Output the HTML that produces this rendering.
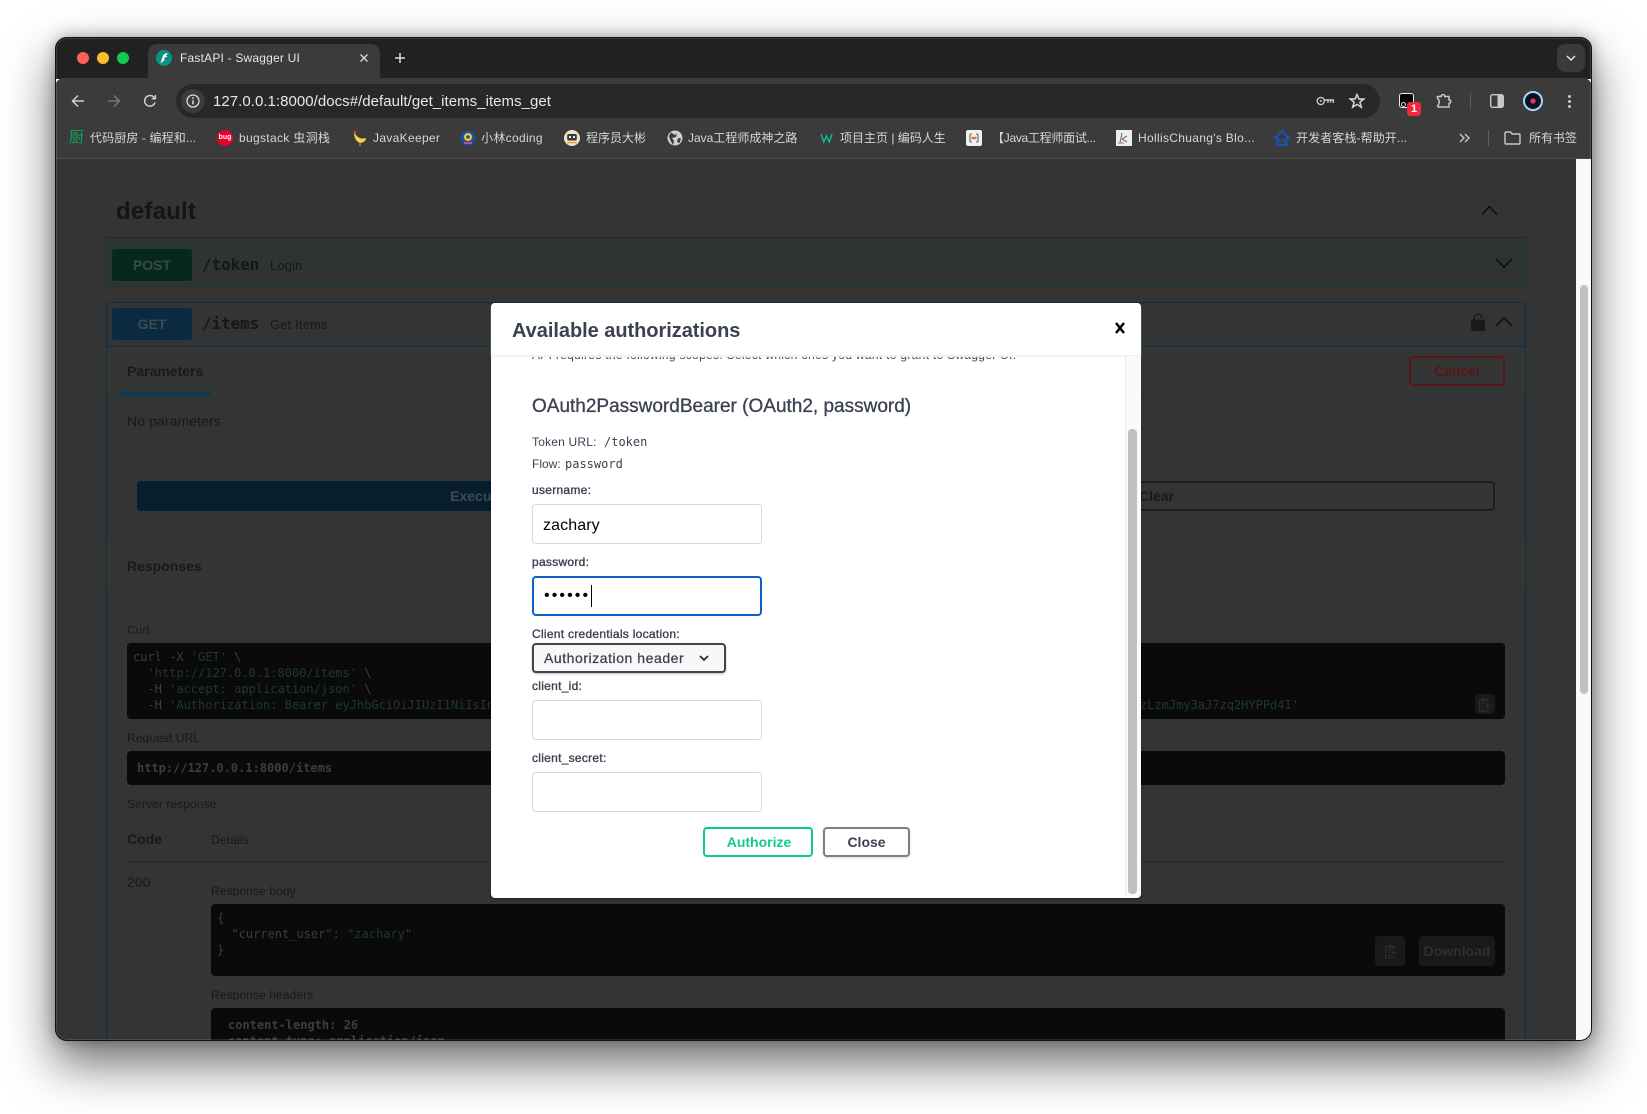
<!DOCTYPE html>
<html lang="zh">
<head>
<meta charset="utf-8">
<title>FastAPI - Swagger UI</title>
<style>
html,body{margin:0;padding:0;background:#fff;width:1647px;height:1114px;overflow:hidden}
body{font-family:"Liberation Sans","Noto Sans CJK SC",sans-serif;position:relative}
.a{position:absolute}
.t{position:absolute;white-space:nowrap;line-height:20px;height:20px}
.m{font-family:"DejaVu Sans Mono","Liberation Mono",monospace}
#clip{position:absolute;left:0;top:0;width:1647px;height:1114px;clip-path:inset(37px 55px 73px 55px round 12px)}
.bm{font-size:12px;color:#d6d6d6}
.ls{letter-spacing:.32px}
.lab{font-size:12px;color:#3b4151;-webkit-text-stroke:.35px #3b4151;letter-spacing:.28px}
.pg{color:#151618}
.inp{position:absolute;left:532px;width:230px;height:40px;box-sizing:border-box;border:1px solid #d9d9d9;border-radius:4px;background:#fff}
.blk{position:absolute;background:#0a0a0b;border-radius:4px}
.cw{color:#3d3d3d;font-size:12px;line-height:16px;height:16px}
.cg{color:#1d3b27}
svg{position:absolute;display:block;overflow:visible}
</style>
</head>
<body>
<div class="a" style="left:55px;top:37px;width:1537px;height:1004px;border-radius:12px;box-shadow:0 22px 48px 2px rgba(0,0,0,.55),0 0 14px rgba(0,0,0,.3)"></div>
<div id="clip">
  <!-- title bar -->
  <div class="a" style="left:55px;top:37px;width:1537px;height:42px;background:#202221"></div>
  <div class="a" style="left:83px;top:58px;width:12px;height:12px;margin:-6px;border-radius:50%;background:#ff5f57"></div>
  <div class="a" style="left:103px;top:58px;width:12px;height:12px;margin:-6px;border-radius:50%;background:#febc2e"></div>
  <div class="a" style="left:123px;top:58px;width:12px;height:12px;margin:-6px;border-radius:50%;background:#13c94f"></div>
  <div class="a" style="left:148px;top:44px;width:232px;height:36px;background:#3b3b3b;border-radius:9px 9px 0 0"></div>
  <div class="a" style="left:156px;top:50px;width:16px;height:16px;border-radius:50%;background:#0b9283"></div>
  <svg style="left:156px;top:50px" width="16" height="16" viewBox="0 0 16 16"><path d="M4.5 13.5L6.8 6.2C7.3 4.6 8.8 3.4 11.8 2.9L10 6H11.6L9.8 7.4H8.7L7.9 9.6H9.2Z" fill="#fff"/></svg>
  <div class="t" style="left:180px;top:48px;font-size:12px;color:#e6e6e6;letter-spacing:.2px">FastAPI - Swagger UI</div>
  <svg style="left:360px;top:54px" width="8" height="8" viewBox="0 0 8 8"><path d="M.5.5L7.5 7.5M7.5.5L.5 7.5" stroke="#dcdcdc" stroke-width="1.3"/></svg>
  <svg style="left:394px;top:52px" width="12" height="12" viewBox="0 0 12 12"><path d="M6 1V11M1 6H11" stroke="#dcdcdc" stroke-width="1.5"/></svg>
  <div class="a" style="left:1557px;top:44px;width:28px;height:28px;border-radius:8px;background:#3a3a3a"></div>
  <svg style="left:1566px;top:55px" width="10" height="6" viewBox="0 0 10 6"><path d="M1 1L5 5L9 1" stroke="#e6e6e6" stroke-width="1.5" fill="none"/></svg>

  <!-- toolbar -->
  <div class="a" style="left:55px;top:78px;width:1537px;height:81px;background:#3b3b3b;border-radius:9px 9px 0 0;border-bottom:1px solid #4b4b4b;box-sizing:border-box"></div>
  <svg style="left:71px;top:94px" width="14" height="14" viewBox="0 0 14 14"><path d="M13 7H2M7 1.5L1.5 7L7 12.5" stroke="#cfcfcf" stroke-width="1.5" fill="none"/></svg>
  <svg style="left:107px;top:94px" width="14" height="14" viewBox="0 0 14 14"><path d="M1 7H12M7 1.5L12.5 7L7 12.5" stroke="#777" stroke-width="1.5" fill="none"/></svg>
  <svg style="left:143px;top:94px" width="14" height="14" viewBox="0 0 14 14"><path d="M12 8.5A5.3 5.3 0 1 1 10.6 3L12.2 4.6M12.4 1V4.8H8.6" stroke="#cfcfcf" stroke-width="1.5" fill="none"/></svg>
  <div class="a" style="left:176px;top:84px;width:1204px;height:34px;border-radius:17px;background:#282828"></div>
  <div class="a" style="left:181px;top:89px;width:24px;height:24px;border-radius:50%;background:#3b3b3b"></div>
  <svg style="left:186px;top:94px" width="14" height="14" viewBox="0 0 14 14"><circle cx="7" cy="7" r="6" stroke="#dcdcdc" stroke-width="1.3" fill="none"/><path d="M7 6.2V10.4" stroke="#dcdcdc" stroke-width="1.5"/><circle cx="7" cy="4.2" r=".9" fill="#dcdcdc"/></svg>
  <div class="t" style="left:213px;top:92px;font-size:15px;color:#e8e8e8;letter-spacing:.04px">127.0.0.1:8000/docs#/default/get_items_items_get</div>
  <svg style="left:1316px;top:95px" width="18" height="12" viewBox="0 0 18 12"><circle cx="4.8" cy="6" r="3.6" stroke="#c8c8c8" stroke-width="1.4" fill="none"/><circle cx="4.8" cy="6" r="1" fill="#c8c8c8"/><path d="M8.4 5H17.4V8M12 5V8M14.8 5V7.5" stroke="#c8c8c8" stroke-width="1.4" fill="none"/></svg>
  <svg style="left:1349px;top:93px" width="16" height="16" viewBox="0 0 16 16"><path d="M8 1.5L9.9 6H14.8L10.9 9.2L12.3 14.2L8 11.4L3.7 14.2L5.1 9.2L1.2 6H6.1Z" stroke="#d8d8d8" stroke-width="1.5" fill="none"/></svg>
  <div class="a" style="left:1399px;top:93px;width:15px;height:15px;box-sizing:border-box;border:1px solid #eee;border-radius:3px;background:#000"></div>
  <div class="a" style="left:1401px;top:102px;width:5px;height:5px;border:1px solid #ddd;border-radius:50%;box-sizing:border-box"></div>
  <div class="a" style="left:1407px;top:102px;width:14px;height:14px;border-radius:3px;background:#f5263f;color:#fff;font-size:11px;font-weight:bold;line-height:14px;text-align:center">1</div>
  <svg style="left:1435px;top:92px" width="18" height="18" viewBox="0 0 18 18"><path d="M2.5 4.5H6.2C6 2 10 2 9.8 4.5H14V8C16.4 7.8 16.4 11.4 14 11.2V15H3.5C2.6 15 2.5 14 3 13.4C4.6 11.4 4.6 8.6 3 6.6C2.5 6 2 4.5 2.5 4.5Z" stroke="#c8c8c8" stroke-width="1.5" fill="none"/></svg>
  <div class="a" style="left:1470px;top:93px;width:1px;height:16px;background:#5e5e5e"></div>
  <svg style="left:1490px;top:94px" width="14" height="14" viewBox="0 0 14 14"><rect x=".7" y=".7" width="12.6" height="12.6" rx="2" stroke="#c8c8c8" stroke-width="1.4" fill="none"/><rect x="7.5" y="1" width="5.8" height="12" fill="#c8c8c8"/></svg>
  <svg style="left:1523px;top:91px" width="20" height="20" viewBox="0 0 20 20"><circle cx="10" cy="10" r="9" fill="#0c1226" stroke="#a8d8f0" stroke-width="2"/><circle cx="10" cy="10" r="2.6" fill="#ef3350"/></svg>
  <div class="a" style="left:1568px;top:95px;width:3px;height:3px;border-radius:50%;background:#c8c8c8"></div>
  <div class="a" style="left:1568px;top:100px;width:3px;height:3px;border-radius:50%;background:#c8c8c8"></div>
  <div class="a" style="left:1568px;top:105px;width:3px;height:3px;border-radius:50%;background:#c8c8c8"></div>

  <!-- bookmarks -->
  <div class="t" style="left:69px;top:128px;font-size:15px;color:#10a35a">厨</div>
  <div class="t bm" style="left:90px;top:128px;letter-spacing:.12px">代码厨房 - 编程和...</div>
  <div class="a" style="left:217px;top:130px;width:16px;height:16px;border-radius:50%;background:#e8002a;color:#fff;font-size:7px;font-weight:bold;line-height:16px;text-align:center">bug</div>
  <div class="t bm ls" style="left:239px;top:128px">bugstack 虫洞栈</div>
  <svg style="left:352px;top:130px" width="16" height="16" viewBox="0 0 16 16"><path d="M2 2C4 6 8 10 14 8C14 12 9 14 6 12C3 10 2 6 2 2Z" fill="#f4d04a"/><path d="M8 13V16" stroke="#aaa" stroke-width="1"/><circle cx="3" cy="2" r="1.5" fill="#c23b22"/></svg>
  <div class="t bm ls" style="left:373px;top:128px">JavaKeeper</div>
  <svg style="left:460px;top:130px" width="16" height="16" viewBox="0 0 16 16"><circle cx="8" cy="8" r="7.5" fill="#1d4fa0"/><circle cx="8" cy="7" r="4" fill="#f5c83a"/><circle cx="8" cy="7" r="1.8" fill="#1d4fa0"/><path d="M4 13H12" stroke="#e05a7a" stroke-width="1.5"/></svg>
  <div class="t bm ls" style="left:481px;top:128px">小林coding</div>
  <svg style="left:564px;top:130px" width="16" height="16" viewBox="0 0 16 16"><circle cx="8" cy="8" r="8" fill="#eee4cf"/><rect x="3.2" y="4" width="9.6" height="6.5" rx="1.5" fill="#3a3a3a"/><rect x="5" y="6" width="2" height="2" fill="#eee"/><rect x="9" y="6" width="2" height="2" fill="#eee"/><path d="M3 12.6H13" stroke="#e3a63c" stroke-width="1.4"/></svg>
  <div class="t bm" style="left:586px;top:128px">程序员大彬</div>
  <svg style="left:667px;top:130px" width="16" height="16" viewBox="0 0 16 16"><circle cx="8" cy="8" r="7.5" fill="#d0d0d0"/><path d="M4 2.5L8 5L10 3.5L9 7L5 8L7 11L6 15L3.2 10L2 6ZM11 8L14 8.5L12.5 13L10 12Z" fill="#3b3b3b"/></svg>
  <div class="t bm" style="left:688px;top:128px">Java工程师成神之路</div>
  <svg style="left:820px;top:133px" width="13" height="10" viewBox="0 0 13 10"><path d="M1 1L3.8 9L6.5 3L9.2 9L12 1" stroke="#11b892" stroke-width="1.5" fill="none"/></svg>
  <div class="t bm" style="left:840px;top:128px">项目主页 | 编码人生</div>
  <div class="a" style="left:966px;top:130px;width:16px;height:16px;border-radius:2px;background:#f2f2f2"></div>
  <svg style="left:966px;top:130px" width="16" height="16" viewBox="0 0 16 16"><path d="M4 4H6M10 4H12M4 12H6M10 12H12M4 4V12M12 4V12" fill="none" stroke="#666" stroke-width="1.1"/><path d="M5.5 8H10.5" stroke="#e27a2e" stroke-width="2.4"/></svg>
  <div class="t bm" style="left:992px;top:128px;letter-spacing:-.28px">【Java工程师面试...</div>
  <div class="a" style="left:1116px;top:130px;width:16px;height:16px;background:#eee"></div>
  <svg style="left:1116px;top:130px" width="16" height="16" viewBox="0 0 16 16"><path d="M4 13L6 3M6 9L11 12M6 9L11 6" stroke="#777" stroke-width="1.1" fill="none"/><path d="M2 13H8" stroke="#d76a8a" stroke-width="1.2"/></svg>
  <div class="t bm ls" style="left:1138px;top:128px">HollisChuang's Blo...</div>
  <svg style="left:1274px;top:130px" width="16" height="16" viewBox="0 0 16 16"><path d="M8 1L15 8H12.5V15H3.5V8H1Z" fill="none" stroke="#1a54c4" stroke-width="1.8"/><path d="M6 9V13M10 9V13" stroke="#1a54c4" stroke-width="1.6"/></svg>
  <div class="t bm" style="left:1296px;top:128px;letter-spacing:.1px">开发者客栈-帮助开...</div>
  <svg style="left:1459px;top:133px" width="11" height="10" viewBox="0 0 11 10"><path d="M1 1L5 5L1 9M6 1L10 5L6 9" stroke="#c8c8c8" stroke-width="1.4" fill="none"/></svg>
  <div class="a" style="left:1488px;top:130px;width:1px;height:16px;background:#5e5e5e"></div>
  <svg style="left:1504px;top:131px" width="17" height="14" viewBox="0 0 17 14"><path d="M1 2.2C1 1.5 1.5 1 2.2 1H6.5L8.2 3H15C15.6 3 16 3.4 16 4V12C16 12.6 15.6 13 15 13H2C1.4 13 1 12.6 1 12Z" stroke="#c8c8c8" stroke-width="1.4" fill="none"/></svg>
  <div class="t bm" style="left:1529px;top:128px">所有书签</div>

  <!-- dim page -->
  <div class="a" style="left:55px;top:159px;width:1521px;height:882px;background:#343434"></div>
  <div class="a" style="left:1576px;top:159px;width:16px;height:882px;background:#f9f9f9"></div>
  <div class="a" style="left:1580px;top:285px;width:8px;height:409px;border-radius:4px;background:#c1c1c1"></div>

  <div class="t pg" style="left:116px;top:202px;font-size:24px;line-height:20px;font-weight:bold;color:#141517;letter-spacing:.2px">default</div>
  <svg style="left:1481px;top:205px" width="17" height="10" viewBox="0 0 17 10"><path d="M1 9.5L8.5 1.5L16 9.5" stroke="#0a0a0a" stroke-width="1.4" fill="none"/></svg>
  <div class="a" style="left:106px;top:237px;width:1420px;height:1px;background:#262626"></div>

  <!-- POST -->
  <div class="a" style="left:106px;top:243px;width:1420px;height:44px;box-sizing:border-box;background:#2f3331;border:1px solid #0d3f29;border-radius:4px"></div>
  <div class="a" style="left:112px;top:249px;width:80px;height:32px;border-radius:3px;background:#052a1b;color:#3a4a42;font-size:14px;font-weight:bold;line-height:32px;text-align:center">POST</div>
  <div class="t m pg" style="left:202px;top:255px;font-size:16px;font-weight:bold;line-height:20px;letter-spacing:-.1px">/token</div>
  <div class="t" style="left:270px;top:256px;font-size:13px;color:#17181a;letter-spacing:.15px">Login</div>
  <svg style="left:1495px;top:258px" width="18" height="10" viewBox="0 0 18 10"><path d="M1 1L9 9L17 1" stroke="#0a0a0a" stroke-width="1.5" fill="none"/></svg>

  <!-- GET -->
  <div class="a" style="left:106px;top:302px;width:1420px;height:760px;box-sizing:border-box;background:#323436;border:1px solid #0e3048;border-radius:4px"></div>
  <div class="a" style="left:107px;top:346px;width:1418px;height:1px;background:#0e3048"></div>
  <div class="a" style="left:107px;top:347px;width:1418px;height:49px;background:#343535"></div>
  <div class="a" style="left:107px;top:396px;width:1418px;height:1px;background:#303030"></div>
  <div class="a" style="left:107px;top:540px;width:1418px;height:51px;background:#343535"></div>
  <div class="a" style="left:107px;top:591px;width:1418px;height:1px;background:#303030"></div>
  <div class="a" style="left:112px;top:308px;width:80px;height:32px;border-radius:3px;background:#0a2a3f;color:#3e4a50;font-size:14px;font-weight:bold;line-height:32px;text-align:center">GET</div>
  <div class="t m pg" style="left:202px;top:314px;font-size:16px;font-weight:bold;letter-spacing:-.1px">/items</div>
  <div class="t" style="left:270px;top:315px;font-size:13px;color:#17181a;letter-spacing:.15px">Get Items</div>
  <svg style="left:1471px;top:313px" width="14" height="18" viewBox="0 0 14 18"><path d="M3.2 8V4.5C3.2 2.3 5 1 7 1S10.8 2.3 10.8 4.5V5" stroke="#1a1a1a" stroke-width="1.6" fill="none"/><rect x="0" y="6.5" width="14" height="11.5" rx="2" fill="#1a1a1a"/></svg>
  <svg style="left:1495px;top:317px" width="18" height="10" viewBox="0 0 18 10"><path d="M1 9L9 1L17 9" stroke="#0a0a0a" stroke-width="1.5" fill="none"/></svg>
  <div class="t" style="left:127px;top:361px;font-size:14px;font-weight:bold;color:#18191b">Parameters</div>
  <div class="a" style="left:119px;top:392px;width:92px;height:4px;background:#0e3a56"></div>
  <div class="a" style="left:1409px;top:356px;width:96px;height:30px;box-sizing:border-box;border:2px solid #5a1519;border-radius:4px;color:#5a1519;font-size:14px;font-weight:bold;line-height:26px;text-align:center">Cancel</div>
  <div class="t" style="left:127px;top:411px;font-size:14px;color:#17181a;letter-spacing:.1px">No parameters</div>
  <div class="a" style="left:137px;top:481px;width:680px;height:30px;border-radius:4px;background:#061e2d;color:#3c4a52;font-size:14px;font-weight:bold;line-height:30px;text-align:center">Execute</div>
  <div class="a" style="left:821px;top:481px;width:674px;height:30px;box-sizing:border-box;border:2px solid #1c1d1f;border-radius:4px;color:#17181a;font-size:14px;font-weight:bold;line-height:26px;text-align:center;padding-right:3px">Clear</div>
  <div class="t" style="left:127px;top:556px;font-size:14px;font-weight:bold;color:#18191b">Responses</div>
  <div class="t" style="left:127px;top:620px;font-size:12px;color:#17181a">Curl</div>
  <div class="blk" style="left:127px;top:643px;width:1378px;height:76px"></div>
  <div class="t m cw" style="left:133px;top:649px">curl -X <span class="cg">'GET'</span> \</div>
  <div class="t m cw" style="left:133px;top:665px">&nbsp;&nbsp;<span class="cg">'http://127.0.0.1:8000/items'</span> \</div>
  <div class="t m cw" style="left:133px;top:681px">&nbsp;&nbsp;-H <span class="cg">'accept: application/json'</span> \</div>
  <div class="t m cw" style="left:133px;top:697px">&nbsp;&nbsp;-H <span class="cg">'Authorization: Bearer eyJhbGciOiJIUzI1NiIsInR5cCI6IkpXVCJ9.eyJzdWIiOiJ6YWNoYXJ5In0</span></div>
  <div class="t m cw cg" style="left:1140px;top:697px">zLzmJmy3aJ7zq2HYPPd4I'</div>
  <div class="a" style="left:1475px;top:694px;width:20px;height:20px;border-radius:3px;background:#18191b"></div>
  <svg style="left:1478px;top:697px" width="14" height="15" viewBox="0 0 14 15"><path d="M4 2.5H1.5V14H10V10M8 2.5H10V6M4 2H5.2C5.3.6 6.7.6 6.8 2H8V4H4ZM3.5 6.5H7M3.5 9H6M3.5 11.5H7M8 8.5H13.5M9.8 6.8L8 8.5L9.8 10.2" stroke="#2e2f31" stroke-width="1.1" fill="none"/></svg>

  <div class="t" style="left:127px;top:728px;font-size:12px;color:#17181a;letter-spacing:.1px">Request URL</div>
  <div class="blk" style="left:127px;top:751px;width:1378px;height:34px"></div>
  <div class="t m" style="left:137px;top:758px;font-size:12px;font-weight:bold;color:#3d3d3d">http://127.0.0.1:8000/items</div>
  <div class="t" style="left:127px;top:794px;font-size:12px;color:#17181a;letter-spacing:.1px">Server response</div>
  <div class="t" style="left:127px;top:829px;font-size:14px;font-weight:bold;color:#17181a">Code</div>
  <div class="t" style="left:211px;top:830px;font-size:12px;color:#17181a;letter-spacing:.2px">Details</div>
  <div class="a" style="left:127px;top:861px;width:1378px;height:1px;background:#26272a"></div>
  <div class="t" style="left:127px;top:872px;font-size:14px;color:#17181a">200</div>
  <div class="t" style="left:211px;top:881px;font-size:12px;color:#17181a;letter-spacing:.1px">Response body</div>
  <div class="blk" style="left:211px;top:904px;width:1294px;height:72px"></div>
  <div class="t m cw" style="left:217px;top:910px">{</div>
  <div class="t m cw" style="left:217px;top:926px">&nbsp;&nbsp;"current_user": <span class="cg">"zachary"</span></div>
  <div class="t m cw" style="left:217px;top:942px">}</div>
  <div class="a" style="left:1375px;top:936px;width:30px;height:30px;border-radius:4px;background:#18191b"></div>
  <svg style="left:1384px;top:944px" width="14" height="15" viewBox="0 0 14 15"><path d="M4 2.5H1.5V14H10V10M8 2.5H10V6M4 2H5.2C5.3.6 6.7.6 6.8 2H8V4H4ZM3.5 6.5H7M3.5 9H6M3.5 11.5H7M8 8.5H13.5M9.8 6.8L8 8.5L9.8 10.2" stroke="#2e2f31" stroke-width="1.1" fill="none"/></svg>
  <div class="a" style="left:1419px;top:936px;width:76px;height:30px;border-radius:4px;background:#18191b;color:#2e2f31;font-size:14px;font-weight:bold;line-height:30px;text-align:center">Download</div>
  <div class="t" style="left:211px;top:985px;font-size:12px;color:#17181a;letter-spacing:.1px">Response headers</div>
  <div class="blk" style="left:211px;top:1008px;width:1294px;height:60px"></div>
  <div class="t m cw" style="left:228px;top:1017px;font-weight:bold">content-length: 26</div>
  <div class="t m cw" style="left:228px;top:1033px;font-weight:bold">content-type: application/json</div>

  <!-- modal -->
  <div class="a" style="left:491px;top:303px;width:650px;height:595px;background:#fff;border-radius:4px;box-shadow:0 1px 2px rgba(0,0,0,.35)"></div>
  <div class="t" style="left:532px;top:345px;font-size:12px;color:#3b4151;letter-spacing:.3px">API requires the following scopes. Select which ones you want to grant to Swagger UI.</div>
  <div class="a" style="left:491px;top:303px;width:650px;height:52px;background:#fff;border-radius:4px 4px 0 0;box-shadow:0 1px 0 #efefef,0 2px 1px #f7f7f7"></div>
  <div class="a" style="left:1125px;top:356px;width:15px;height:540px;background:#fafafa;border-left:1px solid #e8e8e8;box-sizing:border-box"></div>
  <div class="a" style="left:1128px;top:429px;width:9px;height:465px;border-radius:4px;background:#c1c1c1"></div>
  <div class="t" style="left:512px;top:321px;font-size:20px;font-weight:bold;color:#3b4151;letter-spacing:-.04px">Available authorizations</div>
  <svg style="left:1115px;top:322px" width="10" height="12" viewBox="0 0 10 12"><path d="M1 1L9 11M9 1L1 11" stroke="#000" stroke-width="2.4"/></svg>

  <div class="t" style="left:532px;top:397px;font-size:19px;color:#3b4151;-webkit-text-stroke:.3px #3b4151">OAuth2PasswordBearer (OAuth2, password)</div>
  <div class="t" style="left:532px;top:432px;font-size:12px;color:#3b4151;letter-spacing:.2px">Token URL:</div>
  <div class="t m" style="left:604px;top:432px;font-size:12px;color:#3b4151">/token</div>
  <div class="t" style="left:532px;top:454px;font-size:12px;color:#3b4151">Flow:</div>
  <div class="t m" style="left:565px;top:454px;font-size:12px;color:#3b4151">password</div>
  <div class="t lab" style="left:532px;top:480px">username:</div>
  <div class="inp" style="top:504px"></div>
  <div class="t" style="left:543px;top:516px;font-size:16px;color:#000;letter-spacing:.1px">zachary</div>
  <div class="t lab" style="left:532px;top:552px">password:</div>
  <div class="inp" style="top:576px;border:2px solid #0a62c4"></div>
  <div class="t" style="left:544px;top:586px;font-size:16px;color:#000;letter-spacing:2.1px">••••••</div>
  <div class="a" style="left:591px;top:585px;width:1px;height:22px;background:#000"></div>
  <div class="t lab" style="left:532px;top:624px">Client credentials location:</div>
  <div class="a" style="left:532px;top:643px;width:194px;height:30px;box-sizing:border-box;border:2px solid #41444e;border-radius:4px;background:#f7f7f7;box-shadow:0 1px 2px rgba(0,0,0,.25)"></div>
  <div class="t" style="left:544px;top:648px;font-size:14px;color:#3b4151;-webkit-text-stroke:.25px #3b4151;letter-spacing:.55px">Authorization header</div>
  <svg style="left:699px;top:655px" width="10" height="7" viewBox="0 0 10 7"><path d="M1 1L5 5L9 1" stroke="#222" stroke-width="1.6" fill="none"/></svg>
  <div class="t lab" style="left:532px;top:676px">client_id:</div>
  <div class="inp" style="top:700px"></div>
  <div class="t lab" style="left:532px;top:748px">client_secret:</div>
  <div class="inp" style="top:772px"></div>
  <div class="a" style="left:703px;top:827px;width:110px;height:30px;box-sizing:border-box;border:2px solid #0bcb93;border-radius:4px;color:#14c98f;font-size:14px;font-weight:bold;line-height:26px;text-align:center;padding-left:2px">Authorize</div>
  <div class="a" style="left:823px;top:827px;width:87px;height:30px;box-sizing:border-box;border:2px solid #7f7f7f;border-radius:4px;color:#3b4151;font-size:14px;font-weight:bold;line-height:26px;text-align:center;box-shadow:0 1px 2px rgba(0,0,0,.15)">Close</div>
</div>
<div class="a" style="left:55px;top:37px;width:1537px;height:1004px;box-sizing:border-box;border:1px solid #111;border-radius:12px;box-shadow:inset 0 0 0 1px rgba(255,255,255,.13);pointer-events:none"></div>
</body>
</html>
